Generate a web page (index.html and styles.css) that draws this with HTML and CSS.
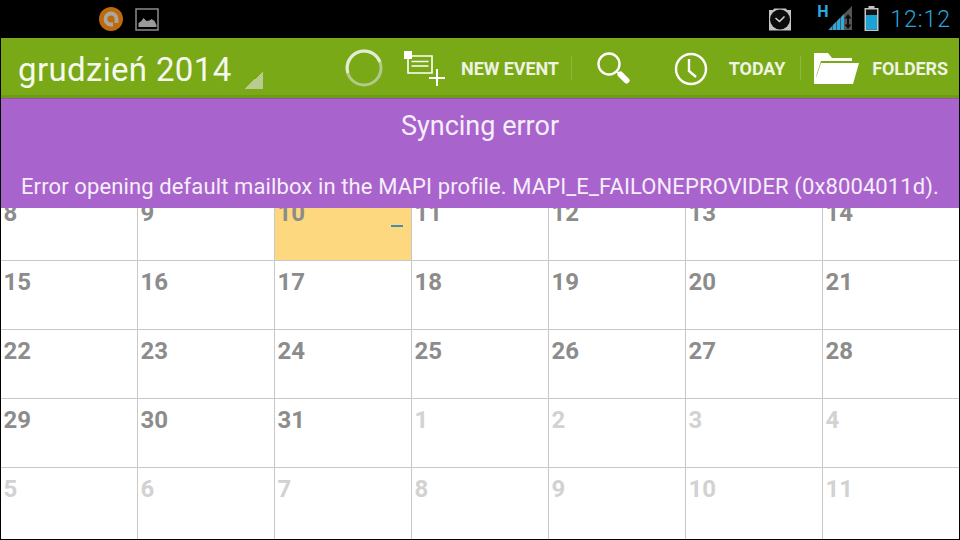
FILE: index.html
```html
<!DOCTYPE html>
<html lang="pl">
<head>
<meta charset="utf-8">
<title>Calendar</title>
<link rel="stylesheet" href="styles.css">
</head>
<body>
<div class="screen">
  <div class="status">
    <div class="status-left">
      <svg class="ic-app" width="24" height="24" viewBox="0 0 24 24"><circle cx="12" cy="12" r="12" fill="#bd6a0e"/><path d="M17.500 16V12A5.500 5.500 0 1 0 12 17.500h2" fill="none" stroke="#aaa6a0" stroke-width="3.800"/></svg>
      <svg class="ic-pic" width="24" height="23" viewBox="0 0 24 23"><rect x="1" y="1" width="22" height="21" fill="none" stroke="#8c8c8c" stroke-width="1.500"/><path d="M3.500 19v-4l3-2 2-3 3 3 3-.5 2-1.500 3 2 2 4v2z" fill="#9a9a9a"/></svg>
    </div>
    <div class="status-right">
      <svg class="ic-alarm" width="24" height="24" viewBox="0 0 24 24"><path d="M1 3h4l1-1.500h12l1 1.500h4v20.500H1z" fill="#c4c4c4"/><circle cx="12" cy="12.500" r="10" fill="#0c0c0c"/><path d="M7.500 11l4 3.500 5-5" fill="none" stroke="#d8d8d8" stroke-width="1.500"/></svg>
      <span class="h-mark">H</span>
      <svg class="ic-signal" width="24" height="24" viewBox="12 0 24 24"><path d="M12 24L36 0v24z" fill="#555"/><path d="M13 24l3-3.500V24zM17 24v-5l3-3v8zM21 24v-9l3-3v12zM25 24V11l3-3v16z" fill="#2ea9e0"/><path d="M32 8l3.500 4.500h-7zM32 23l3.500-4.500h-7z" fill="#0c0c0c"/><path d="M31 12h2v7h-2z" fill="#0c0c0c"/></svg>
      <svg class="ic-batt" width="15" height="25" viewBox="0 0 15 25"><path d="M4.500 0h6v2h4v23H.5V2h4z" fill="#c4c4c4"/><rect x="2" y="3.500" width="11" height="20" fill="#111"/><rect x="2" y="9" width="11" height="14.500" fill="#1ba3d8"/></svg>
      <span class="clock">12:12</span>
    </div>
  </div>

  <div class="actionbar">
    <div class="month">grudzień 2014<i class="month-caret"></i></div>
    <div class="actions">
      <svg class="spinner" width="38" height="38" viewBox="0 0 38 38"><circle cx="19" cy="19" r="17" fill="none" stroke="#b4c98c" stroke-width="3"/><path d="M3 24A17 17 0 0 1 19 2a17 17 0 0 1 16 11" fill="none" stroke="#e4ecd4" stroke-width="3"/></svg>
      <div class="action act-new">
        <svg width="42" height="36" viewBox="0 0 42 36"><g fill="none" stroke="#fff" stroke-width="1.600"><path d="M5 5h24v17H5z"/><path d="M8.500 10.500h17M8.500 15h17"/><path d="M34 18v17M26 27h16" stroke-width="2"/></g><rect x="1" y="0" width="8" height="8" fill="#fff"/></svg>
        <span class="label">NEW EVENT</span>
      </div>
      <i class="sep sep-a"></i>
      <svg class="ic-search" width="34" height="33" viewBox="0 0 34 33"><circle cx="13" cy="12" r="10.500" fill="none" stroke="#fff" stroke-width="2.400"/><path d="M21 20l3 2" stroke="#fff" stroke-width="2"/><path d="M24.500 22.500l6 6" stroke="#fff" stroke-width="6" stroke-linecap="round"/></svg>
      <div class="action act-today">
        <svg width="34" height="34" viewBox="0 0 34 34"><circle cx="17" cy="17" r="15" fill="none" stroke="#fff" stroke-width="2.400"/><path d="M15 7v12l7 6" fill="none" stroke="#fff" stroke-width="2.400"/></svg>
        <span class="label">TODAY</span>
      </div>
      <i class="sep sep-b"></i>
      <div class="action act-folders">
        <svg width="45" height="31" viewBox="0 0 45 31"><path d="M0 0h14l4 5h20v3H7L2.500 22 2 30H0z" fill="#fff"/><path d="M7 10h38l-6 21H0z" fill="#fff"/></svg>
        <span class="label">FOLDERS</span>
      </div>
    </div>
  </div>

  <div class="calendar">
    <div class="weekdays"></div>
    <div class="row"><div class="cell">8</div><div class="cell">9</div><div class="cell today">10<i class="event-dash"></i></div><div class="cell">11</div><div class="cell">12</div><div class="cell">13</div><div class="cell">14</div></div>
    <div class="row"><div class="cell">15</div><div class="cell">16</div><div class="cell">17</div><div class="cell">18</div><div class="cell">19</div><div class="cell">20</div><div class="cell">21</div></div>
    <div class="row"><div class="cell">22</div><div class="cell">23</div><div class="cell">24</div><div class="cell">25</div><div class="cell">26</div><div class="cell">27</div><div class="cell">28</div></div>
    <div class="row"><div class="cell">29</div><div class="cell">30</div><div class="cell">31</div><div class="cell other">1</div><div class="cell other">2</div><div class="cell other">3</div><div class="cell other">4</div></div>
    <div class="row last"><div class="cell other">5</div><div class="cell other">6</div><div class="cell other">7</div><div class="cell other">8</div><div class="cell other">9</div><div class="cell other">10</div><div class="cell other">11</div></div>
  </div>

  <div class="banner">
    <div class="banner-title">Syncing error</div>
    <div class="banner-msg">Error opening default mailbox in the MAPI profile. MAPI_E_FAILONEPROVIDER (0x8004011d).</div>
  </div>
</div>
</body>
</html>
```
FILE: styles.css
```css
* { box-sizing: border-box; }
html, body { margin: 0; padding: 0; }
body { width: 960px; height: 540px; overflow: hidden; background: #000; font-family: Roboto, "Liberation Sans", sans-serif; }
.screen { position: relative; width: 960px; height: 540px; display: flex; flex-direction: column; background: #000; padding: 0 1px 1px 1px; }

.status { height: 38px; display: flex; justify-content: space-between; align-items: flex-start; margin: 0 -1px; flex: none; }
.status-left { display: flex; padding: 7px 0 0 99px; gap: 12px; }
.ic-pic { margin-top: 1px; }
.status-right { display: flex; padding: 0 9px 0 0; }
.ic-alarm { margin: 7px 0 0 0; }
.h-mark { width: 11px; margin: 6px 0 0 25px; font-size: 16px; font-weight: 700; line-height: 12px; color: #2ea9e0; }
.ic-signal { margin: 6px 0 0 0; }
.ic-batt { margin: 6px 0 0 12px; }
.clock { font-size: 23px; font-weight: 300; line-height: 24px; margin: 8px 0 0 11px; color: #2ba6dd; letter-spacing: 1px; }

.actionbar { height: 60px; flex: none; display: flex; align-items: flex-start; justify-content: space-between; background: #79a916; border-bottom: 3px solid #6f9a18; }
.month { color: #f6f8ee; font-size: 33px; line-height: 40px; padding: 12px 0 0 17px; letter-spacing: 0.35px; display: flex; }
.month-caret { width: 18px; height: 18px; margin: 21px 0 0 13px; background: linear-gradient(135deg, transparent 50%, #b9cc8f 50%); }
.actions { display: flex; align-items: flex-start; padding-right: 11px; }
.spinner { margin-top: 11px; }
.action { display: flex; align-items: flex-start; }
.label { color: #eef3e2; font-size: 18px; font-weight: 700; line-height: 20px; letter-spacing: -0.1px; }
.act-new { margin: 13px 0 0 20px; }
.act-new .label { margin: 8px 0 0 16px; }
.sep { width: 1px; height: 24px; margin-top: 18px; background: #8fb840; }
.sep-a { margin-left: 12px; }
.ic-search { margin: 14px 0 0 24px; }
.act-today { margin: 14px 0 0 44px; }
.act-today .label { margin: 7px 0 0 21px; }
.sep-b { margin-left: 15px; }
.act-folders { margin: 15px 0 0 13px; }
.act-folders .label { margin: 6px 0 0 13px; }

.calendar { flex: 1; display: flex; flex-direction: column; background: #fff; }
.weekdays { height: 93px; flex: none; }
.row { display: grid; grid-template-columns: repeat(6, 137px) 1fr; height: 69px; flex: none; border-top: 1px solid #c8c8c8; }
.row.last { flex: 1; height: auto; }
.cell { position: relative; border-right: 1px solid #c8c8c8; padding: 8px 0 0 2.500px; color: #8c8c8c; font-size: 24px; font-weight: 700; line-height: 26px; }
.cell:last-child { border-right: 0; }
.cell.other { color: #d2d2d2; }
.cell.today { background: #fed87e; }
.event-dash { position: absolute; right: 8px; top: 33px; width: 12px; height: 2px; background: #3f93ae; }

.banner { position: absolute; left: 1px; top: 98px; width: 958px; height: 110px; background: #a963cc; border-top: 1px solid #8e55ad; color: #f5eefa; text-align: center; }
.banner-title { font-size: 27px; line-height: 30px; padding-top: 12px; }
.banner-msg { font-size: 22px; line-height: 26px; margin-top: 33px; letter-spacing: 0.115px; white-space: nowrap; }
```
